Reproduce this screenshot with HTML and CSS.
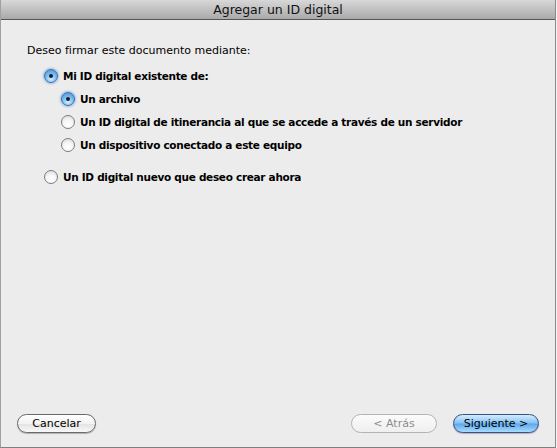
FILE: index.html
```html
<!DOCTYPE html>
<html lang="es">
<head>
<meta charset="utf-8">
<title>Agregar un ID digital</title>
<link rel="stylesheet" href="styles.css">
</head>
<body>
<div class="desk">
  <div class="window">
    <div class="titlebar">Agregar un ID digital</div>
    <div class="content">
      <p class="prompt">Deseo firmar este documento mediante:</p>
      <div class="option top">
        <span class="radio on"></span><span class="label">Mi ID digital existente de:</span>
      </div>
      <div class="sub">
        <div class="option">
          <span class="radio on"></span><span class="label">Un archivo</span>
        </div>
        <div class="option">
          <span class="radio"></span><span class="label">Un ID digital de itinerancia al que se accede a través de un servidor</span>
        </div>
        <div class="option">
          <span class="radio"></span><span class="label">Un dispositivo conectado a este equipo</span>
        </div>
      </div>
      <div class="option top new">
        <span class="radio"></span><span class="label">Un ID digital nuevo que deseo crear ahora</span>
      </div>
    </div>
    <div class="footer">
      <button class="btn">Cancelar</button>
      <div class="spacer"></div>
      <button class="btn disabled">&lt; Atrás</button>
      <button class="btn primary">Siguiente &gt;</button>
    </div>
  </div>
  <div class="edge"></div>
</div>
</body>
</html>
```
FILE: styles.css
```css
* { box-sizing: border-box; }
html, body { margin: 0; padding: 0; }
body {
  width: 557px;
  height: 448px;
  overflow: hidden;
  font-family: "DejaVu Sans", "Liberation Sans", sans-serif;
  color: #000;
  background: #f4f4f4;
}
.desk { display: flex; height: 448px; }
.window {
  width: 556px;
  height: 448px;
  display: flex;
  flex-direction: column;
  background: #ececec;
  border-left: 1px solid #a0a0a0;
  border-right: 1px solid #8a8a8a;
  border-bottom: 1px solid #808080;
}
.edge { flex: 1; background: #f2f2f2; }
.titlebar {
  height: 20px;
  flex: none;
  background: linear-gradient(#d8d8d8, #a9a9a9);
  border-bottom: 1px solid #555;
  text-align: center;
  font-size: 12.5px;
  line-height: 19px;
  color: #111;
}
.content {
  flex: 1;
  padding: 24px 0 0 26px;
}
.prompt {
  margin: 0 0 6px;
  font-size: 11px;
  line-height: 14px;
}
.option {
  display: flex;
  align-items: center;
  height: 23px;
  font-size: 10.5px;
  font-weight: bold;
}
.option.top { padding-left: 17px; }
.sub { padding-left: 34px; }
.option.new { margin-top: 9px; }
.label { margin-left: 5px; letter-spacing: -0.3px; }
.radio {
  position: relative;
  width: 14px;
  height: 14px;
  border-radius: 50%;
  flex: none;
  background: radial-gradient(circle at 50% 70%, #ffffff 0%, #f6f6f6 45%, #d4d4d4 100%);
  border: 1px solid #7d7d7d;
}
.radio.on {
  border-color: #3f6ea8;
  background: radial-gradient(circle at 50% 75%, #d7f0ff 0%, #7fbef0 45%, #3f8fd8 100%);
  box-shadow: 0 0 2px 1px rgba(90,150,230,0.55);
}
.radio.on::after {
  content: "";
  position: absolute;
  left: 4px;
  top: 4px;
  width: 4px;
  height: 4px;
  border-radius: 50%;
  background: #151a2a;
}
.footer {
  height: 44px;
  flex: none;
  display: flex;
  align-items: flex-start;
  padding: 11px 16px 0 16px;
  gap: 16px;
}
.spacer { flex: 1; }
.btn {
  width: 79px;
  height: 19px;
  border-radius: 10px;
  font-family: "DejaVu Sans", sans-serif;
  font-size: 11px;
  line-height: 16px;
  padding: 0;
  color: #000;
  border: 1px solid #6a6a6a;
  background: linear-gradient(#ffffff 0%, #f2f2f2 50%, #e2e2e2 51%, #f8f8f8 100%);
  box-shadow: 0 1px 1px rgba(0,0,0,0.25);
}
.btn.disabled {
  width: 86px;
  color: #8c8c8c;
  border-color: #b4b4b4;
  background: linear-gradient(#fbfbfb, #efefef);
  box-shadow: none;
}
.btn.primary {
  width: 86px;
  border-color: #3b4f8c;
  background: linear-gradient(#d4ecff 0%, #86c2f4 48%, #5ba7ea 52%, #a8dcff 100%);
}
```
